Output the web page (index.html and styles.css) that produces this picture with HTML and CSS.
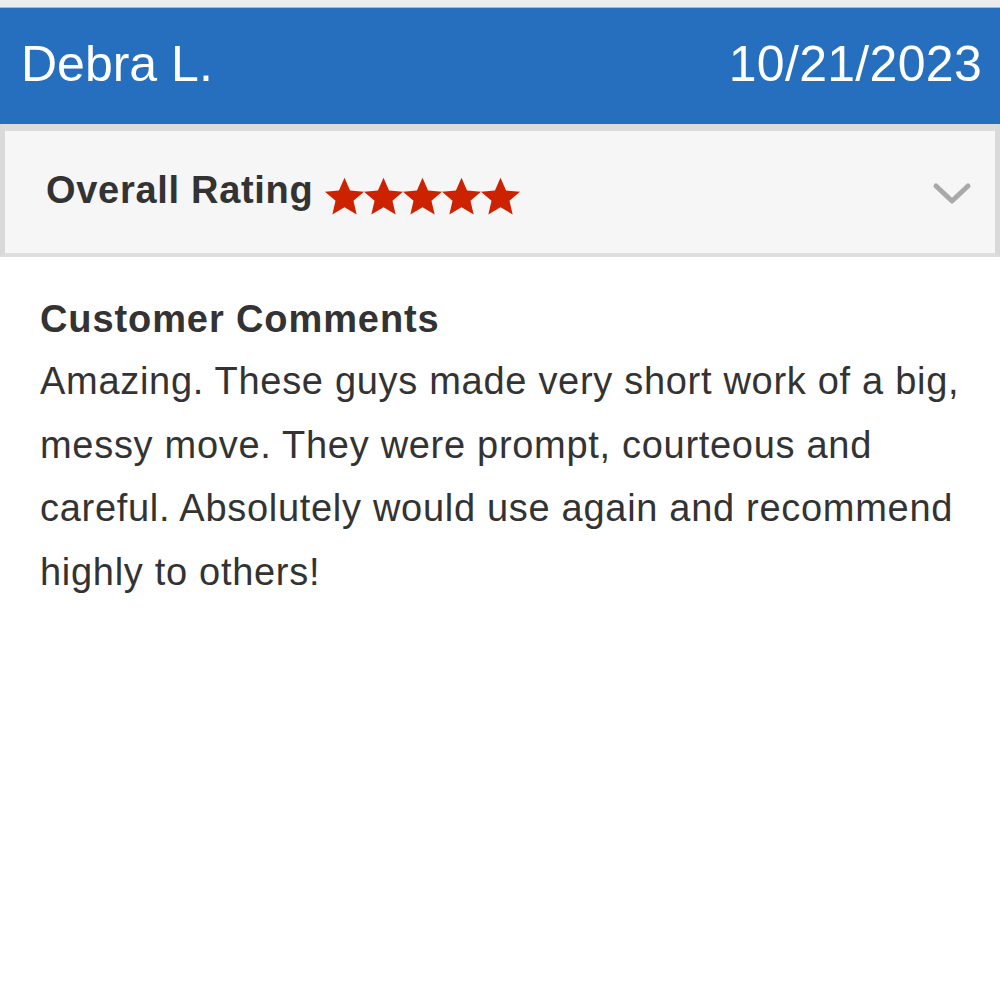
FILE: index.html
```html
<!DOCTYPE html>
<html>
<head>
<meta charset="utf-8">
<link rel="stylesheet" href="styles.css">
</head>
<body>
<div class="topstrip"></div>
<header class="header">
  <span class="name">Debra L.</span>
  <span class="date">10/21/2023</span>
</header>
<section class="rating">
  <span class="label">Overall Rating</span>
  <span class="stars">
    <svg class="star" viewBox="0 0 24 24"><path d="M12 1.5l3.1 7.2 7.8.6-5.9 5.1 1.8 7.6L12 18l-6.8 4 1.8-7.6-5.9-5.1 7.8-.6z"/></svg>
    <svg class="star" viewBox="0 0 24 24"><path d="M12 1.5l3.1 7.2 7.8.6-5.9 5.1 1.8 7.6L12 18l-6.8 4 1.8-7.6-5.9-5.1 7.8-.6z"/></svg>
    <svg class="star" viewBox="0 0 24 24"><path d="M12 1.5l3.1 7.2 7.8.6-5.9 5.1 1.8 7.6L12 18l-6.8 4 1.8-7.6-5.9-5.1 7.8-.6z"/></svg>
    <svg class="star" viewBox="0 0 24 24"><path d="M12 1.5l3.1 7.2 7.8.6-5.9 5.1 1.8 7.6L12 18l-6.8 4 1.8-7.6-5.9-5.1 7.8-.6z"/></svg>
    <svg class="star" viewBox="0 0 24 24"><path d="M12 1.5l3.1 7.2 7.8.6-5.9 5.1 1.8 7.6L12 18l-6.8 4 1.8-7.6-5.9-5.1 7.8-.6z"/></svg>
  </span>
  <svg class="chevron" viewBox="0 0 40 24"><path d="M4 4l16 15 16-15"/></svg>
</section>
<section class="comments">
  <h2 class="title">Customer Comments</h2>
  <p class="text">Amazing. These guys made very short work of a big, messy move. They were prompt, courteous and careful. Absolutely would use again and recommend highly to others!</p>
</section>
</body>
</html>
```
FILE: styles.css
```css
html, body {
  margin: 0;
  padding: 0;
  background: #ffffff;
  font-family: "Liberation Sans", Arial, sans-serif;
}
.topstrip {
  height: 7px;
  background: #ebebeb;
  border-bottom: 1px solid #9fb9dd;
}
.header {
  height: 116px;
  background: #266fbf;
  color: #ffffff;
  display: flex;
  justify-content: space-between;
  align-items: center;
  padding: 0 18px 0 21px;
  font-size: 50px;
  line-height: 1;
}
.header span {
  padding-bottom: 4px;
}
.date {
  letter-spacing: 0.3px;
}
.rating {
  border-top: 7px solid #dcdcdc;
  border-left: 5px solid #d9d9d9;
  border-right: 5px solid #d9d9d9;
  border-bottom: 4px solid #dedede;
  background: #f6f6f6;
  height: 122px;
  display: flex;
  align-items: center;
  padding-left: 41px;
  padding-right: 23px;
  box-sizing: content-box;
}
.label {
  font-weight: bold;
  font-size: 38px;
  letter-spacing: 0.7px;
  color: #333333;
  padding-bottom: 4px;
}
.stars {
  display: flex;
  margin-left: 10px;
  margin-top: 8px;
}
.star {
  width: 43px;
  height: 43px;
  margin-right: -4px;
  fill: #cc2200;
}
.chevron {
  margin-left: auto;
  width: 40px;
  height: 24px;
  fill: none;
  stroke: #a9a9a9;
  stroke-width: 5;
  stroke-linecap: round;
  stroke-linejoin: round;
  margin-top: 4px;
}
.comments {
  padding: 40px 30px 0 40px;
  color: #333333;
}
.title {
  margin: 0;
  font-size: 38px;
  font-weight: bold;
  letter-spacing: 0.9px;
  line-height: 44px;
}
.text {
  margin: 9px 0 0 0;
  font-size: 38px;
  letter-spacing: 0.7px;
  line-height: 63.5px;
}
```
